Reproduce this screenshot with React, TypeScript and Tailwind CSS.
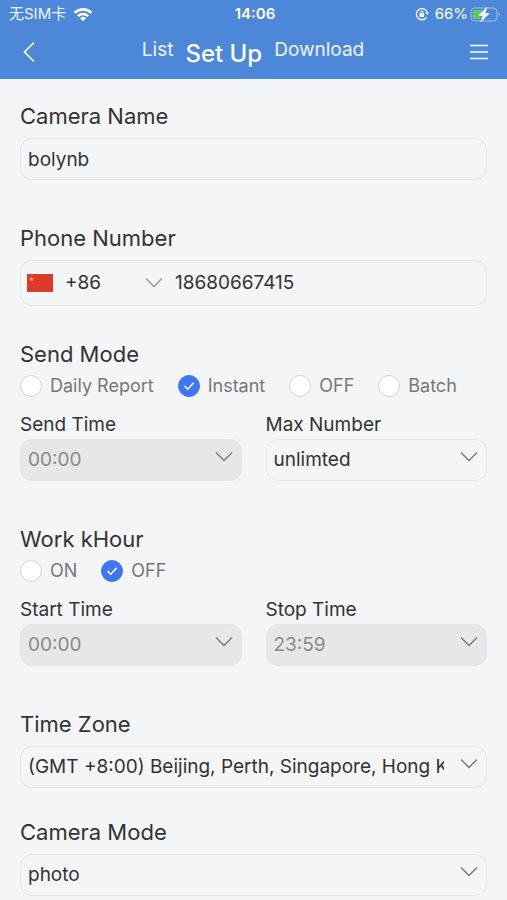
import { useState } from 'react'
import type { ReactNode } from 'react'
import clsx from 'clsx'

function ChevronDown({ className }: { className?: string }) {
  return (
    <svg
      viewBox="0 0 18 12"
      className={clsx('pointer-events-none absolute h-3 w-[18px]', className)}
      fill="none"
      stroke="currentColor"
      strokeWidth="1.4"
      aria-hidden="true"
    >
      <path d="M1 1.5l8 8 8-8" />
    </svg>
  )
}

function StatusBar() {
  return (
    <div className="grid h-7 grid-cols-3 items-center pr-[6px] pl-[9px] text-[15px] leading-5">
      <div className="flex items-center gap-[7px]">
        <span className="text-white/90">无SIM卡</span>
        <svg viewBox="0 0 20 15" className="h-[15px] w-5" fill="none" stroke="currentColor" strokeWidth="2.6" aria-hidden="true">
          <path d="M1.6 5.8a12 12 0 0 1 16.8 0" />
          <path d="M4.8 9.1a7.4 7.4 0 0 1 10.4 0" />
          <path d="M10 14.2l-3-3a4.3 4.3 0 0 1 6 0z" fill="currentColor" stroke="none" />
        </svg>
      </div>
      <span className="text-center font-semibold">14:06</span>
      <div className="flex items-center justify-end gap-[2px]">
        <svg viewBox="0 0 14 14" className="mr-1 h-[14px] w-[14px]" fill="none" stroke="currentColor" strokeWidth="1.3" aria-hidden="true">
          <path d="M12.2 5.2A5.6 5.6 0 1 0 11.6 10.3" />
          <path d="M10.3 5.2h3.6l-1.6 2.8z" fill="currentColor" stroke="none" />
          <rect x="4.4" y="6.3" width="4.8" height="3.6" rx=".6" fill="currentColor" stroke="none" />
          <path d="M5.5 6.5V5.4a1.3 1.3 0 0 1 2.6 0v1.1" strokeWidth="1" />
        </svg>
        <span>66%</span>
        <svg viewBox="0 0 31 15" className="h-[15px] w-[31px]" aria-hidden="true">
          <rect x="1" y="1" width="26" height="13" rx="3.5" fill="none" stroke="#9dbde9" strokeWidth="1" />
          <path d="M28.5 5.5v4a2.2 2.2 0 0 0 0-4z" fill="#9dbde9" />
          <path d="M4.5 3H12l-1.5 9h-6A2 2 0 0 1 2.5 10V5a2 2 0 0 1 2-2z" fill="#5fcb5b" />
          <path d="M16.8.5L9 8.3h4.2L11 14.5l8-8h-4.3z" fill="#fff" stroke="#fff" strokeWidth=".8" />
        </svg>
      </div>
    </div>
  )
}

function NavBar() {
  return (
    <div className="flex h-[51px] items-center justify-between pr-[19px] pl-[22px]">
      <button type="button" aria-label="Back" className="-mt-1">
        <svg viewBox="0 0 14 22" className="h-[22px] w-[14px]" fill="none" stroke="currentColor" strokeWidth="1.6" aria-hidden="true">
          <path d="M12 1.5L2.5 11l9.5 9.5" />
        </svg>
      </button>
      <nav className="flex items-start gap-3 text-[19px] leading-6">
        <a href="#list" className="text-white/90">
          List
        </a>
        <a href="#setup" aria-current="page" className="text-[24px] leading-8 font-medium">
          Set Up
        </a>
        <a href="#download" className="text-white/90">
          Download
        </a>
      </nav>
      <button type="button" aria-label="Menu" className="-mt-1">
        <svg viewBox="0 0 18 16" className="h-4 w-[18px]" stroke="currentColor" strokeWidth="1.6" aria-hidden="true">
          <path d="M0 1.5h18M0 8h18M0 14.5h18" />
        </svg>
      </button>
    </div>
  )
}

interface SelectFieldProps {
  id: string
  options: string[]
  disabled?: boolean
}

function SelectField({ id, options, disabled }: SelectFieldProps) {
  return (
    <div className="relative">
      <select
        id={id}
        disabled={disabled}
        className={clsx(
          'h-[42px] w-full appearance-none rounded-xl border pr-[42px] pl-[7px] text-[19px] opacity-100',
          disabled ? 'border-[#e4e5e6] bg-[#e7e7e7] text-[#8a8a8a]' : 'border-[#e3e5e7] bg-transparent text-[#333]'
        )}
      >
        {options.map((option) => (
          <option key={option}>{option}</option>
        ))}
      </select>
      <ChevronDown className="top-3 right-[9px] text-[#777]" />
    </div>
  )
}

interface RadioGroupProps {
  name: string
  options: string[]
  initial: string
}

function RadioGroup({ name, options, initial }: RadioGroupProps) {
  const [value, setValue] = useState(initial)

  return (
    <div className="flex h-8 items-center gap-6">
      {options.map((option) => (
        <label key={option} className="flex items-center gap-2 text-[18px] leading-6 text-[#777]">
          <span className="relative h-[22px] w-[22px]">
            <input
              type="radio"
              name={name}
              value={option}
              checked={value === option}
              onChange={() => setValue(option)}
              className="peer block h-[22px] w-[22px] appearance-none rounded-full border border-[#d3d4d6] bg-white checked:border-[#3f76f6] checked:bg-[#3f76f6]"
            />
            <svg
              viewBox="0 0 22 22"
              className="pointer-events-none absolute inset-0 hidden text-white peer-checked:block"
              fill="none"
              stroke="currentColor"
              strokeWidth="1.6"
              aria-hidden="true"
            >
              <path d="M6.5 11l3.2 3.2 6-6.5" />
            </svg>
          </span>
          {option}
        </label>
      ))}
    </div>
  )
}

function Title({ htmlFor, children }: { htmlFor?: string; children: ReactNode }) {
  const className = 'block text-[22px] leading-8 text-[#333]'
  return htmlFor ? (
    <label htmlFor={htmlFor} className={className}>
      {children}
    </label>
  ) : (
    <h2 className={className}>{children}</h2>
  )
}

function SmallSelect({ label, ...field }: SelectFieldProps & { label: string }) {
  return (
    <div>
      <label htmlFor={field.id} className="block text-[19px] leading-7 text-[#333]">
        {label}
      </label>
      <SelectField {...field} />
    </div>
  )
}

export default function App() {
  return (
    <div className="min-h-screen bg-[#f3f5f7] font-['Inter','Noto_Sans_CJK_SC',sans-serif] text-[#333]">
      <header className="bg-[#4d88d8] text-white">
        <StatusBar />
        <NavBar />
      </header>

      <form className="px-5 pt-[21px] pb-1">
        <section>
          <Title htmlFor="camera-name">Camera Name</Title>
          <input
            id="camera-name"
            defaultValue="bolynb"
            className="mt-[6px] block h-[42px] w-full rounded-xl border border-[#e3e5e7] px-[7px] text-[19px]"
          />
        </section>

        <section className="mt-[42px]">
          <Title htmlFor="phone">Phone Number</Title>
          <div className="mt-[6px] flex h-[46px] items-center rounded-xl border border-[#e3e5e7] pl-[6px]">
            <svg viewBox="0 0 26 18" className="h-[18px] w-[26px]" aria-hidden="true">
              <rect width="26" height="18" fill="#de3a2c" />
              <path d="M4.5 2.5l.7 1.7 1.8.1-1.4 1.2.4 1.8-1.5-1-1.5 1 .4-1.8L2 4.3l1.8-.1z" fill="#f7b04a" />
            </svg>
            <div className="relative w-[122px]">
              <select
                aria-label="Country code"
                className="w-full appearance-none pl-3 text-[19px]"
              >
                <option>+86</option>
              </select>
              <ChevronDown className="top-2 right-3 text-[#999]" />
            </div>
            <input id="phone" type="tel" defaultValue="18680667415" className="min-w-0 flex-1 text-[19px]" />
          </div>
        </section>

        <section className="mt-8">
          <Title>Send Mode</Title>
          <RadioGroup name="send-mode" options={['Daily Report', 'Instant', 'OFF', 'Batch']} initial="Instant" />
          <div className="mt-[9px] grid grid-cols-2 gap-6">
            <SmallSelect id="send-time" label="Send Time" options={['00:00']} disabled />
            <SmallSelect id="max-number" label="Max Number" options={['unlimted']} />
          </div>
        </section>

        <section className="mt-[42px]">
          <Title>Work kHour</Title>
          <RadioGroup name="work-hour" options={['ON', 'OFF']} initial="OFF" />
          <div className="mt-[9px] grid grid-cols-2 gap-6">
            <SmallSelect id="start-time" label="Start Time" options={['00:00']} disabled />
            <SmallSelect id="stop-time" label="Stop Time" options={['23:59']} disabled />
          </div>
        </section>

        <section className="mt-[42px] space-y-[6px]">
          <Title htmlFor="time-zone">Time Zone</Title>
          <SelectField id="time-zone" options={['(GMT +8:00) Beijing, Perth, Singapore, Hong Kong']} />
        </section>

        <section className="mt-7 space-y-[6px]">
          <Title htmlFor="camera-mode">Camera Mode</Title>
          <SelectField id="camera-mode" options={['photo']} />
        </section>
      </form>
    </div>
  )
}
